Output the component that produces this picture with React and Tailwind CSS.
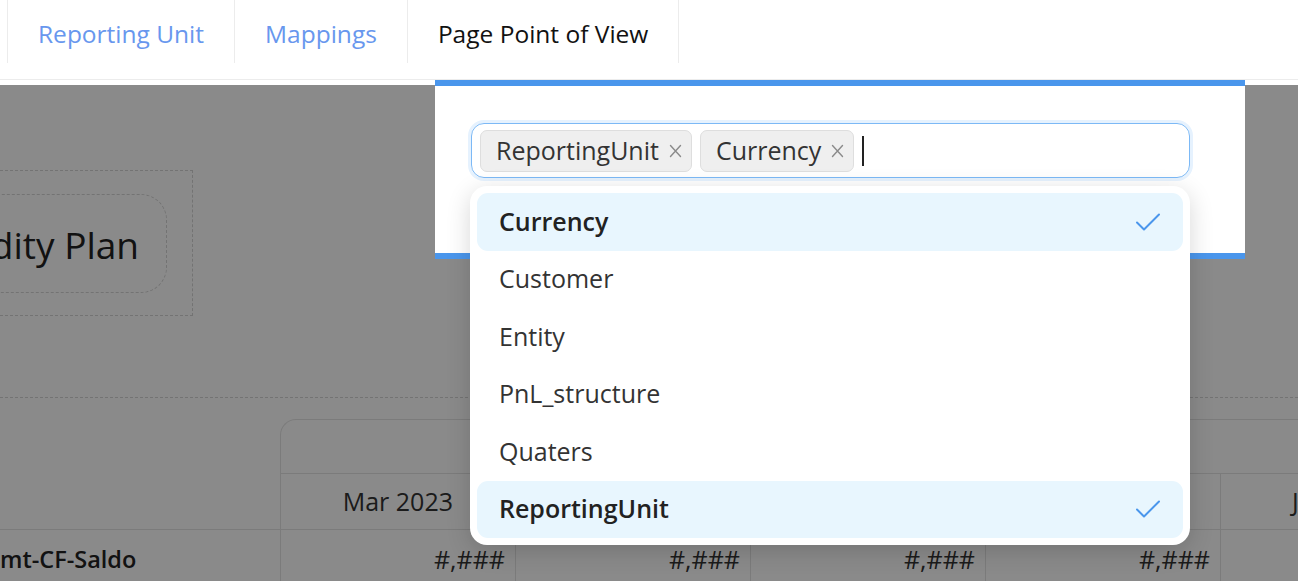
import React from 'react';

const font = { fontFamily: '"Open Sans", "Noto Sans", sans-serif' };

const tabs = [
  { label: 'Reporting Unit', active: false },
  { label: 'Mappings', active: false },
  { label: 'Page Point of View', active: true },
];

const options = ['Currency', 'Customer', 'Entity', 'PnL_structure', 'Quaters', 'ReportingUnit'];
const selected = ['ReportingUnit', 'Currency'];

const Check = () => (
  <svg width="26" height="20" viewBox="0 0 26 20" fill="none">
    <path d="M2 10.5 L9 17.5 L24 2.5" stroke="#4a96ec" strokeWidth="2" strokeLinecap="round" strokeLinejoin="round" />
  </svg>
);

const Cross = () => (
  <svg width="13" height="14" viewBox="0 0 13 14" fill="none">
    <path d="M1.5 1.5 L11.5 12.5 M11.5 1.5 L1.5 12.5" stroke="#8a8a8a" strokeWidth="1.4" strokeLinecap="round" />
  </svg>
);

const Tag = ({ label }) => (
  <div className="flex items-center h-[42px] pl-[15px] pr-[9px] gap-[10px] bg-[#efefef] border border-[#dedede] rounded-[7px] text-[25px] text-[#333]">
    <span className="leading-none pb-[1px]">{label}</span>
    <Cross />
  </div>
);

const cols = ['Mar 2023', '', '', '', 'Jun 2023'];

const App = () => {
  return (
    <div className="relative w-full h-[581px] overflow-hidden bg-white" style={font}>
      {/* tab bar */}
      <div className="h-[80px] border-b border-[#ececec] bg-white">
        <div className="flex pl-[7px]">
          {tabs.map((t, i) => (
            <div
              key={t.label}
              className={`h-[63px] flex items-center pt-[6px] px-[30px] border-l border-[#ececec] text-[24.5px] ${i === tabs.length - 1 ? 'border-r' : ''} ${t.active ? 'text-[#111]' : 'text-[#6897ee]'}`}
            >
              {t.label}
            </div>
          ))}
        </div>
      </div>

      {/* page content (dimmed) */}
      <div className="text-[#333]">
        <div className="mt-[90px] ml-[-220px] w-[413px] h-[146px] border border-dashed border-[#d4d4d4] pt-[23px] pr-[25px]">
          <div className="h-[99px] border border-dashed border-[#d4d4d4] rounded-[26px] flex items-center justify-end pr-[27px]">
            <span className="text-[37px] text-[#222] whitespace-nowrap pt-[2px]">Liquidity Plan</span>
          </div>
        </div>

        <div className="mt-[81px] border-t border-dashed border-[#d4d4d4]" />

        <div className="mt-[21px] text-[25px]">
          <div className="flex h-[54px]">
            <div className="w-[280px] shrink-0" />
            <div className="flex-1 border-t border-l border-[#e4e4e4] rounded-tl-[16px]" />
          </div>
          <div className="flex h-[56px]">
            <div className="w-[280px] shrink-0" />
            {cols.map((c, i) => (
              <div key={i} className="w-[235px] shrink-0 border-t border-l border-[#e4e4e4] flex items-center justify-end pr-[62px] whitespace-nowrap">
                {c}
              </div>
            ))}
          </div>
          <div className="flex h-[60px] border-t border-[#e4e4e4]">
            <div className="w-[280px] shrink-0 flex items-center font-semibold text-[23.5px] text-[#222] whitespace-nowrap">
              mt-CF-Saldo
            </div>
            {cols.map((c, i) => (
              <div key={i} className={`w-[235px] shrink-0 border-l border-[#e4e4e4] flex items-center justify-end pr-[10px] ${i === 4 ? 'text-transparent' : ''}`}>
                #,###
              </div>
            ))}
          </div>
        </div>
      </div>

      {/* overlay */}
      <div className="absolute left-0 right-0 top-[85px] bottom-0 bg-black/[0.46]" />

      {/* modal */}
      <div className="absolute left-[435px] top-[80px] w-[810px] h-[179px] bg-white border-t-[6px] border-b-[6px] border-[#4a96ec]">
        <div className="mt-[37px] ml-[36px] w-[719px] h-[55px] rounded-[13px] border border-[#7cb9f6] shadow-[0_0_0_3px_#e6f2fe] flex items-center gap-[8px] pl-[8px]">
          {selected.map((s) => (
            <Tag key={s} label={s} />
          ))}
          <div className="w-[2px] h-[30px] bg-[#222]" />
        </div>
      </div>

      {/* dropdown */}
      <div className="absolute left-[470px] top-[186px] w-[720px] h-[359px] bg-white rounded-[17px] shadow-[0_6px_24px_rgba(0,0,0,0.16)] p-[7px]">
        {options.map((o) => {
          const isSel = selected.includes(o);
          return (
            <div
              key={o}
              className={`h-[57.5px] rounded-[11px] flex items-center justify-between pl-[22px] pr-[22px] text-[25px] ${isSel ? 'bg-[#e8f6fe] font-semibold text-[24.5px] text-[#222]' : 'text-[#333]'}`}
            >
              <span className="pb-[1px]">{o}</span>
              {isSel && <Check />}
            </div>
          );
        })}
      </div>
    </div>
  );
};

export default App;
